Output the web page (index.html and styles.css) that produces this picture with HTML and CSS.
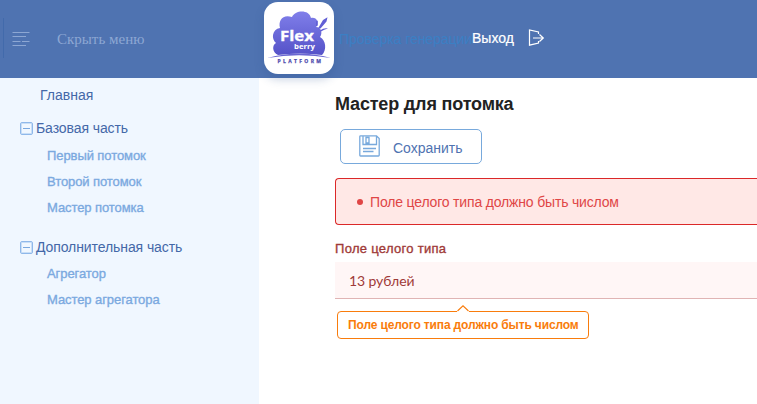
FILE: index.html
```html
<!DOCTYPE html>
<html lang="ru">
<head>
<meta charset="utf-8">
<title>Мастер для потомка</title>
<link rel="stylesheet" href="styles.css">
</head>
<body>
<header class="header">
  <button class="menu-toggle">
    <svg width="18" height="16" viewBox="0 0 18 16" fill="none" stroke="#8da7d3" stroke-width="1"><path d="M.5 1.500h17M.5 5.500h13.500M.5 10.500h8M10 10.500h7.500M.5 14.500h13.500"/></svg>
    <span class="menu-label">Скрыть меню</span>
  </button>
  <div class="logo">
    <svg width="70" height="72" viewBox="0 0 70 72">
      <defs><linearGradient id="cloud" x1="0" y1="0" x2="0" y2="1"><stop offset="0" stop-color="#807fea"/><stop offset="1" stop-color="#5552c8"/></linearGradient></defs>
      <path d="M14 53C8 50 8 43 12 41C7 37 8 27 16 26C14 18 19 12 28 15C31 8 45 7 47 16C53 15 55 20 52 25C57 25 59 31 56 35C62 38 63 48 58 53Q36 50 14 53Z" fill="url(#cloud)"/>
      <path d="M3.500 56Q35 47 67 56Q35 50.500 3.500 56Z" fill="#6a67d2"/>
      <path d="M52 24.500L52 19.500L53.800 18.500L53.800 23.500ZM54 26.500L59 18L63.500 15.200L62.500 19.500L56.500 26.500ZM56 28.500Q60 25.500 64 26.500Q60 27.500 57 29.500Z" fill="#615fd5"/>
      <text class="logo-main" x="16" y="39" textLength="34" lengthAdjust="spacingAndGlyphs">Flex</text>
      <text class="logo-sub" x="30" y="47" textLength="21" lengthAdjust="spacingAndGlyphs">berry</text>
      <text class="logo-foot" x="13.500" y="61" textLength="43.500" lengthAdjust="spacing">PLATFORM</text>
    </svg>
  </div>
  <span class="app-name">Проверка генерации</span>
  <a class="logout">Выход
    <svg width="17" height="18" viewBox="0 0 17 18" fill="none" stroke="#fff" stroke-width="1.200"><path d="M10.500 6V4L1.500 2V17.200L10.500 15V13M5 10H15.500M11.500 6.500L15.300 10L11.500 13.500"/></svg>
  </a>
</header>
<div class="layout">
  <nav class="sidebar">
    <a class="home">Главная</a>
    <section class="group">
      <h2 class="group-title"><i class="collapse"></i><span class="t-base">Базовая часть</span></h2>
      <a class="item">Первый потомок</a>
      <a class="item">Второй потомок</a>
      <a class="item">Мастер потомка</a>
    </section>
    <section class="group">
      <h2 class="group-title extra"><i class="collapse"></i><span class="t-extra">Дополнительная часть</span></h2>
      <a class="item">Агрегатор</a>
      <a class="item">Мастер агрегатора</a>
    </section>
  </nav>
  <main class="content">
    <h1 class="title">Мастер для потомка</h1>
    <button class="save">
      <svg width="21" height="22" viewBox="0 0 21 22" fill="none" stroke="#78a9dc" stroke-width="1.300"><path d="M1.500 .8H17.500L20.200 3.500V20.200Q20.200 21 19.400 21H1.500Q.8 21 .8 20.200V1.500Q.8 .8 1.500 .8ZM4 1V9.500H17.500V1M7 2.500H10V8H7ZM4 13.500H17M4 16.500H14.500"/></svg>
      <span>Сохранить</span>
    </button>
    <div class="alert"><i class="dot"></i><span>Поле целого типа должно быть числом</span></div>
    <label class="label">Поле целого типа</label>
    <div class="field">13 рублей</div>
    <div class="hint">Поле целого типа должно быть числом
      <svg class="hint-arrow" width="12" height="7" viewBox="0 0 12 7"><path d="M0 6L6 .8L12 6V7H0Z" fill="#fff"/><path d="M.5 6L6 .8L11.500 6" fill="none" stroke="#f97c0c" stroke-width="1.100"/></svg>
    </div>
  </main>
</div>
</body>
</html>
```
FILE: styles.css
```css
* { box-sizing: border-box; }
body { margin: 0; width: 757px; height: 404px; overflow: hidden; background: #fff; font: 14px/20px "Liberation Sans", Arial, sans-serif; white-space: nowrap; }
button { border: 0; background: none; padding: 0; font: inherit; }
svg { display: block; flex: none; }
.header { display: flex; align-items: flex-start; height: 78px; background: #4f73b1; position: relative; }
.menu-toggle { width: 261px; height: 40px; margin: 18px 0 0 3px; padding-left: 8px; display: flex; align-items: center; border-left: 1px solid #426aab; gap: 27px; color: #8da7d3; flex: none; }
.menu-toggle svg { margin-top: 2px; }
.menu-label { font: 15px/20px "Liberation Serif", "Times New Roman", serif; margin-top: 2px; }
.logo { width: 70px; height: 72px; margin-top: 2px; border-radius: 14px; background: #fff; box-shadow: 0 5px 10px rgba(48, 83, 145, .28); flex: none; }
.logo text { font-family: "Open Sans", sans-serif; font-weight: 700; }
.logo-main { font-size: 15px; fill: #fff; stroke: #fff; stroke-width: .3; }
.logo-sub { font-size: 7.5px; fill: #fff; }
.logo-foot { font-size: 5px; fill: #4f4bad; stroke: #4f4bad; stroke-width: .25; }
.app-name { width: 133px; margin: 29px 0 0 5px; color: #3b7fc4; letter-spacing: -.05px; flex: none; }
.logout { display: flex; gap: 14px; margin-top: 28px; color: #fff; -webkit-text-stroke: .2px #fff; }
.layout { display: flex; height: 326px; }
.sidebar { width: 259px; background: #f0f7ff; padding-top: 7px; color: #4468a8; flex: none; }
.home { display: block; padding-left: 40px; }
.group { padding-top: 13px; }
.group-title { display: flex; align-items: center; gap: 3px; margin: 0 0 5px; padding-left: 20px; height: 20px; font-size: 14px; font-weight: 400; }
.group-title.extra { margin-top: 3px; margin-bottom: 4px; }
.t-base, .t-extra { letter-spacing: -.09px; }
.collapse { width: 13px; height: 13px; border: 1px solid #8fb8ea; border-radius: 2px; display: grid; place-items: center; box-shadow: inset 0 0 0 1px #c9dff7; }
.collapse::before { content: ""; width: 7px; height: 1px; background: #7aa8df; }
.item { display: block; height: 26px; padding: 3px 0 3px 47px; font-size: 13px; color: #7ba9df; letter-spacing: -.08px; -webkit-text-stroke: .35px #7ba9df; }
.content { width: 498px; padding: 16px 0 0 76px; }
.title { margin: 0; font-size: 18px; line-height: 20px; color: #222; letter-spacing: -.17px; }
.save { display: flex; align-items: center; width: 142px; height: 35px; margin: 15px 0 14px 5px; padding-left: 18px; gap: 13px; border: 1px solid #78a9dc; border-radius: 5px; color: #4f73b1; }
.save svg { margin-bottom: 2px; }
.save span { margin-top: 3px; }
.alert { display: flex; align-items: center; gap: 7px; height: 47px; padding-left: 21px; background: #ffe8e6; border: 1px solid #db2828; border-right: 0; border-radius: 4px 0 0 4px; color: #e04646; letter-spacing: -.17px; }
.dot { width: 6px; height: 6px; border-radius: 50%; background: #e04646; }
.label { display: block; margin-top: 14px; font-size: 13px; line-height: 20px; color: #9f3a38; letter-spacing: .3px; -webkit-text-stroke: .35px #9f3a38; }
.field { height: 37px; margin-top: 3px; padding: 9px 14px; background: #fff6f6; border-bottom: 1px solid #e0b4b4; color: #9f3a38; font: 14px/20px Lato, sans-serif; letter-spacing: -.1px; }
.hint { position: relative; width: 252px; height: 28px; margin: 12px 0 0 2px; padding: 3px 10px; border: 1px solid #f97c0c; border-radius: 4px; background: #fff; color: #f97c0c; font-size: 12px; font-weight: 700; letter-spacing: -.14px; }
.hint-arrow { position: absolute; left: 119px; top: -7px; }
```
